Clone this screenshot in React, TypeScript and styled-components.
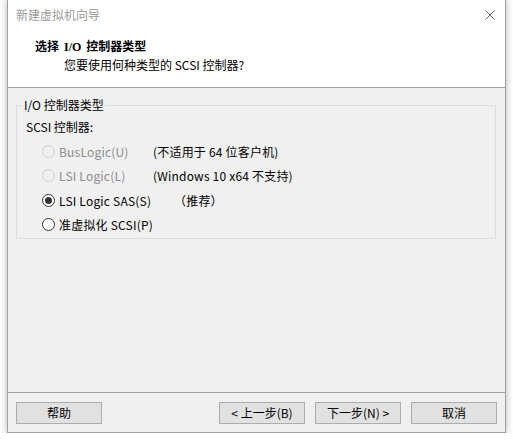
import React, { useState } from "react";
import styled, { createGlobalStyle } from "styled-components";

const GlobalStyle = createGlobalStyle`
    html, body {
        margin: 0;
        padding: 0;
        background: #ffffff;
    }
    body {
        font-family: "Noto Sans CJK SC", "Noto Sans", sans-serif;
        font-size: 12px;
        color: #000;
    }
`

const Window = styled.div`
    margin-left: 7px;
    width: 499px;
    height: 433px;
    box-sizing: border-box;
    border: 1px solid #a0a0a0;
    border-top: none;
    background: #f0f0f0;
    box-shadow: 0 0 7px rgba(0, 0, 0, 0.3);
    display: flex;
    flex-direction: column;
`

const TitleBar = styled.div`
    height: 30px;
    display: flex;
    align-items: center;
    justify-content: space-between;
    padding: 0 10px 0 8px;
    background: #fff;
    color: #9a9a9a;
    line-height: 16px;
`

const CloseButton = styled.div`
    width: 10px;
    height: 10px;
    display: flex;
    margin-top: -1px;
`

const Header = styled.div`
    background: #fff;
    border-bottom: 1px solid #a0a0a0;
    padding-left: 27px;
    box-sizing: border-box;
    height: 58px;
    display: flex;
    flex-direction: column;
    padding-top: 9px;
`

const Heading = styled.div`
    font-family: "Liberation Serif", "Noto Sans CJK SC", serif;
    font-weight: bold;
    font-size: 12px;
    line-height: 17px;
    word-spacing: 2px;
`

const SubHeading = styled.div`
    margin-left: 29px;
    line-height: 17px;
`

const Body = styled.div`
    flex: 1;
    padding: 9px 9px 0 8px;
`

const Group = styled.fieldset`
    margin: 0;
    padding: 0 0 8px 9px;
    border: 1px solid #dcdcdc;
    height: 142px;
    box-sizing: border-box;
`

const Legend = styled.legend`
    margin-left: -3px;
    padding: 0 1px;
    line-height: 16px;
`

const FieldLabel = styled.div`
    height: 24px;
    line-height: 24px;
    margin-top: 2px;
`

const OptionRow = styled.label<{ $disabled?: boolean }>`
    display: flex;
    align-items: center;
    height: 24.5px;
    padding-left: 16px;
    color: ${p => (p.$disabled ? "#8d8d8d" : "#000")};
`

const Choice = styled.span`
    display: flex;
    align-items: center;
    width: 111px;
    letter-spacing: 0.2px;
`

const RadioCircle = styled.span<{ $disabled?: boolean; $checked?: boolean }>`
    width: 13px;
    height: 13px;
    box-sizing: border-box;
    border-radius: 50%;
    border: 1px solid ${p => (p.$disabled ? "#cccccc" : "#333333")};
    background: ${p => (p.$disabled ? "#f0f0f0" : "#ffffff")};
    display: flex;
    align-items: center;
    justify-content: center;
    margin-right: 4px;
    flex-shrink: 0;

    &::after {
        content: "";
        display: ${p => (p.$checked ? "block" : "none")};
        width: 7px;
        height: 7px;
        border-radius: 50%;
        background: #333333;
    }
`

const Note = styled.span<{ $indent?: number }>`
    color: #000;
    padding-left: ${p => p.$indent ?? 0}px;
    letter-spacing: 0.2px;
`

const Footer = styled.div`
    border-top: 1px solid #a0a0a0;
    padding: 9px 8px 8px 8px;
    display: flex;
    align-items: center;
    gap: 10px;
`

const Button = styled.button<{ $push?: boolean }>`
    width: 86px;
    height: 22px;
    box-sizing: border-box;
    border: 1px solid #adadad;
    background: #e1e1e1;
    font-family: "Noto Sans CJK SC", "Noto Sans", sans-serif;
    font-size: 12px;
    color: #000;
    padding: 0;
    margin-left: ${p => (p.$push ? "auto" : "0")};
    line-height: 18px;
`

type Option = {
    label: string;
    note?: string;
    indent?: number;
    disabled?: boolean;
}

const options: Option[] = [
    { label: "BusLogic(U)", note: "(不适用于 64 位客户机)", disabled: true },
    { label: "LSI Logic(L)", note: "(Windows 10 x64 不支持)", disabled: true },
    { label: "LSI Logic SAS(S)", note: "（推荐）", indent: 21 },
    { label: "准虚拟化 SCSI(P)" },
]

const App: React.FC = () => {
    const [selected, setSelected] = useState<number>(2);

    return (
        <>
            <GlobalStyle />
            <Window>
                <TitleBar>
                    <span>新建虚拟机向导</span>
                    <CloseButton>
                        <svg width="10" height="10" viewBox="0 0 10 10">
                            <path d="M0.5 0.5 L9.5 9.5 M9.5 0.5 L0.5 9.5" stroke="#6b6b6b" strokeWidth="1" fill="none" />
                        </svg>
                    </CloseButton>
                </TitleBar>
                <Header>
                    <Heading>选择 I/O 控制器类型</Heading>
                    <SubHeading>您要使用何种类型的 SCSI 控制器?</SubHeading>
                </Header>
                <Body>
                    <Group>
                        <Legend>I/O 控制器类型</Legend>
                        <FieldLabel>SCSI 控制器:</FieldLabel>
                        {options.map((o, i) => (
                            <OptionRow
                                key={o.label}
                                $disabled={o.disabled}
                                onClick={() => !o.disabled && setSelected(i)}
                            >
                                <Choice>
                                    <RadioCircle $disabled={o.disabled} $checked={selected === i} />
                                    {o.label}
                                </Choice>
                                {o.note && <Note $indent={o.indent}>{o.note}</Note>}
                            </OptionRow>
                        ))}
                    </Group>
                </Body>
                <Footer>
                    <Button>帮助</Button>
                    <Button $push>&lt; 上一步(B)</Button>
                    <Button>下一步(N) &gt;</Button>
                    <Button>取消</Button>
                </Footer>
            </Window>
        </>
    )
}

export default App;
